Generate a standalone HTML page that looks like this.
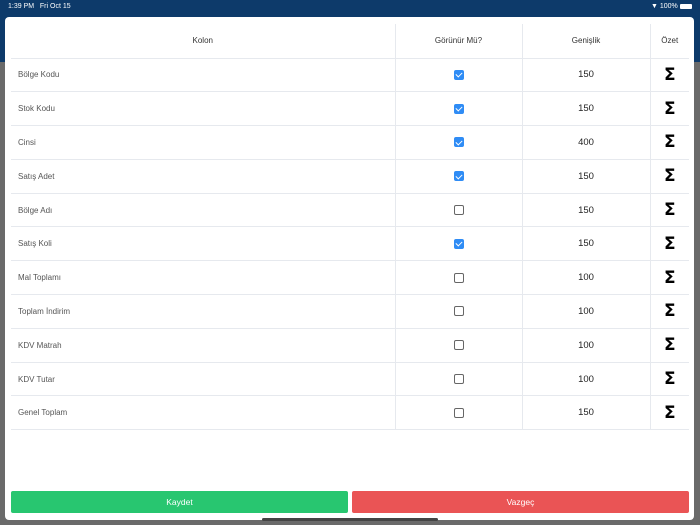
<!DOCTYPE html>
<html><head><style>
*{margin:0;padding:0;box-sizing:border-box}
body{width:700px;height:525px;overflow:hidden;position:relative;background:#6a6a6a;font-family:"Liberation Sans",sans-serif}
.top{position:absolute;left:0;top:0;width:700px;height:62px;background:#0d3a6a}
.sb{position:absolute;top:3px;font-size:7px;color:#fff}
.modal{position:absolute;left:5px;top:17px;width:689px;height:503px;background:#fff;border-radius:4px}
table{position:absolute;left:6px;top:7px;width:678px;border-collapse:collapse}
td{height:33.8px;border-bottom:1px solid #e6e9ee;font-size:8px;color:#555;text-align:center}
td+td{border-left:1px solid #e6e9ee}
tr:first-child td{height:34px;color:#333;font-size:8px}
td.l{text-align:left;padding-left:7px;width:384px}
td.c{width:127px}td.g{width:128px;font-size:9.5px;color:#222}
td.s{font-size:17px;font-weight:bold;color:#000;font-family:"DejaVu Sans",sans-serif}
.cb{display:inline-block;width:10px;height:10px;border-radius:2px;background:#2f8cf5;vertical-align:middle;position:relative}
.cb:after{content:"";position:absolute;left:3px;top:1.5px;width:3px;height:5px;border:solid #fff;border-width:0 1.3px 1.3px 0;transform:rotate(45deg)}
.cb.o{background:#fff;border:1.3px solid #666}.cb.o:after{display:none}
.btn{position:absolute;top:474px;height:22px;color:#fff;font-size:8.5px;text-align:center;line-height:22px;border-radius:2px}
</style></head><body>
<div class="top"></div>
<div class="sb" style="left:8px">1:39 PM &nbsp; Fri Oct 15</div>
<div class="sb" style="left:651px">&#9660; 100% <span style="display:inline-block;width:12px;height:5px;background:#fff;border-radius:1px;vertical-align:middle"></span></div>
<div class="modal">
<table>
<tr><td class="l" style="text-align:center;padding:0">Kolon</td><td class="c">Görünür Mü?</td><td class="g" style="font-size:8px;color:#333">Genişlik</td><td>Özet</td></tr>
<tr><td class="l">Bölge Kodu</td><td class="c"><span class="cb"></span></td><td class="g">150</td><td class="s">Σ</td></tr>
<tr><td class="l">Stok Kodu</td><td class="c"><span class="cb"></span></td><td class="g">150</td><td class="s">Σ</td></tr>
<tr><td class="l">Cinsi</td><td class="c"><span class="cb"></span></td><td class="g">400</td><td class="s">Σ</td></tr>
<tr><td class="l">Satış Adet</td><td class="c"><span class="cb"></span></td><td class="g">150</td><td class="s">Σ</td></tr>
<tr><td class="l">Bölge Adı</td><td class="c"><span class="cb o"></span></td><td class="g">150</td><td class="s">Σ</td></tr>
<tr><td class="l">Satış Koli</td><td class="c"><span class="cb"></span></td><td class="g">150</td><td class="s">Σ</td></tr>
<tr><td class="l">Mal Toplamı</td><td class="c"><span class="cb o"></span></td><td class="g">100</td><td class="s">Σ</td></tr>
<tr><td class="l">Toplam İndirim</td><td class="c"><span class="cb o"></span></td><td class="g">100</td><td class="s">Σ</td></tr>
<tr><td class="l">KDV Matrah</td><td class="c"><span class="cb o"></span></td><td class="g">100</td><td class="s">Σ</td></tr>
<tr><td class="l">KDV Tutar</td><td class="c"><span class="cb o"></span></td><td class="g">100</td><td class="s">Σ</td></tr>
<tr><td class="l">Genel Toplam</td><td class="c"><span class="cb o"></span></td><td class="g">150</td><td class="s">Σ</td></tr>
</table>
<div class="btn" style="left:6px;width:337px;background:#28c670">Kaydet</div>
<div class="btn" style="left:347px;width:337px;background:#ea5455">Vazgeç</div>
</div>
<div style="position:absolute;left:262px;top:518px;width:176px;height:3px;background:#444;border-radius:2px"></div>
</body></html>
